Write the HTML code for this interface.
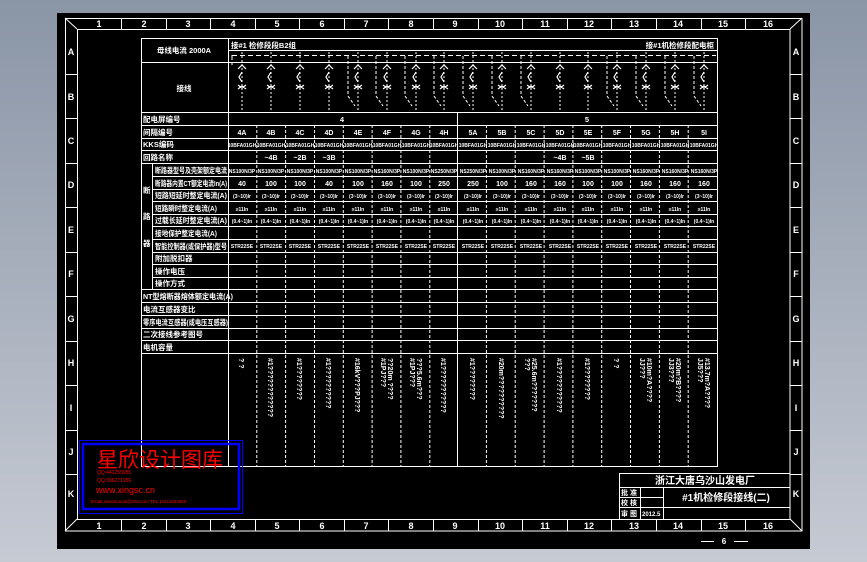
<!DOCTYPE html>
<html><head><meta charset="utf-8"><style>
html,body{margin:0;padding:0;width:867px;height:562px;overflow:hidden}
svg{display:block}
.t{fill:#fff;font-family:"Liberation Sans","Noto Sans CJK SC",sans-serif;font-weight:bold}
.s{font-size:7px}.xs{font-size:5px}.m{text-anchor:middle}
.r{fill:#f00;font-family:"Liberation Sans","Noto Sans CJK SC",sans-serif}
</style></head><body>
<svg width="867" height="562" viewBox="0 0 867 562" xmlns="http://www.w3.org/2000/svg">
<defs><linearGradient id="bg" x1="0" y1="0" x2="0" y2="1"><stop offset="0" stop-color="#8a95a6"/><stop offset="1" stop-color="#c6cad3"/></linearGradient></defs>
<rect width="867" height="562" fill="url(#bg)"/>
<rect x="57" y="13" width="753" height="536" fill="#000"/>
<g stroke="#fff" stroke-width="1" fill="none">
<rect x="65.5" y="18.5" width="736.5" height="512.5"/>
<rect x="77.5" y="29.5" width="712.5" height="490"/>
<path d="M65 18L77 29M802 18L790 29M65 531L77 519M802 531L790 519"/>
<path d="M121.5 18v11M166.5 18v11M210.5 18v11M255.5 18v11M299.5 18v11M344.5 18v11M388.5 18v11M433.5 18v11M478.5 18v11M522.5 18v11M567.5 18v11M611.5 18v11M656.5 18v11M701.5 18v11M745.5 18v11"/>
<path d="M121.5 520v11M166.5 520v11M210.5 520v11M255.5 520v11M299.5 520v11M344.5 520v11M388.5 520v11M433.5 520v11M478.5 520v11M522.5 520v11M567.5 520v11M611.5 520v11M656.5 520v11M701.5 520v11M745.5 520v11"/>
<path d="M65 74.5h12M65 118.5h12M65 163.5h12M65 207.5h12M65 252.5h12M65 296.5h12M65 341.5h12M65 385.5h12M65 430.5h12M65 474.5h12"/>
<path d="M790 74.5h12M790 118.5h12M790 163.5h12M790 207.5h12M790 252.5h12M790 296.5h12M790 341.5h12M790 385.5h12M790 430.5h12M790 474.5h12"/>
<!-- table -->
<path d="M141 38.5h577M141 62.5h577M141 112.5h577M141 125.5h577M141 138.5h577M141 150.5h577M141 163.5h577M141 289.5h577M141 302.5h577M141 315.5h577M141 328.5h577M141 340.5h577M141 353.5h577M141 466.5h577"/>
<path d="M152 176.5h566M152 189.5h566M152 201.5h566M152 214.5h566M152 226.5h566M152 239.5h566M152 252.5h566M152 264.5h566M152 277.5h566"/>
<path d="M141.5 38v428M152.5 163v126M228.5 38v428M717.5 38v428M457.5 112v354"/>
<path stroke-dasharray="3,2" d="M256.8 125v341M285.6 125v341M314.5 125v341M343.3 125v341M372.1 125v341M400.9 125v341M429.8 125v341M486.4 125v341M515.2 125v341M544.1 125v341M572.9 125v341M601.7 125v341M630.5 125v341M659.4 125v341M688.2 125v341"/>
<!-- bus -->
<path d="M228 50.5h490"/>
<path stroke-dasharray="5,3" d="M232 55.5h484M232 55v10"/>
<path stroke-dasharray="2,2" d="M242 52v58M271 52v58M300 52v58M329 52v58M358 52v58M387 52v58M416 52v58M444 52v58M473 52v58M502 52v58M531 52v58M560 52v58M588 52v58M617 52v58M646 52v58M675 52v58M704 52v58"/>
<path stroke-dasharray="3,2" d="M348 56v40l7 10M376 56v40l7 10M405 56v40l7 10M434 56v40l7 10M463 56v40l7 10M492 56v40l7 10M521 56v40l7 10M607 56v40l7 10M636 56v40l7 10M665 56v40l7 10M694 56v40l7 10"/>
</g>
<g stroke="#fff" stroke-width="1.2" fill="none">
<path d="M238 69l4-4 4 4M238 85l4 3 4-3M238 89l4-3 4 3M242 72l-3 5 3 5M267 69l4-4 4 4M267 85l4 3 4-3M267 89l4-3 4 3M271 72l-3 5 3 5M296 69l4-4 4 4M296 85l4 3 4-3M296 89l4-3 4 3M300 72l-3 5 3 5M325 69l4-4 4 4M325 85l4 3 4-3M325 89l4-3 4 3M329 72l-3 5 3 5M354 69l4-4 4 4M354 85l4 3 4-3M354 89l4-3 4 3M358 72l-3 5 3 5M383 69l4-4 4 4M383 85l4 3 4-3M383 89l4-3 4 3M387 72l-3 5 3 5M412 69l4-4 4 4M412 85l4 3 4-3M412 89l4-3 4 3M416 72l-3 5 3 5M440 69l4-4 4 4M440 85l4 3 4-3M440 89l4-3 4 3M444 72l-3 5 3 5M469 69l4-4 4 4M469 85l4 3 4-3M469 89l4-3 4 3M473 72l-3 5 3 5M498 69l4-4 4 4M498 85l4 3 4-3M498 89l4-3 4 3M502 72l-3 5 3 5M527 69l4-4 4 4M527 85l4 3 4-3M527 89l4-3 4 3M531 72l-3 5 3 5M556 69l4-4 4 4M556 85l4 3 4-3M556 89l4-3 4 3M560 72l-3 5 3 5M584 69l4-4 4 4M584 85l4 3 4-3M584 89l4-3 4 3M588 72l-3 5 3 5M613 69l4-4 4 4M613 85l4 3 4-3M613 89l4-3 4 3M617 72l-3 5 3 5M642 69l4-4 4 4M642 85l4 3 4-3M642 89l4-3 4 3M646 72l-3 5 3 5M671 69l4-4 4 4M671 85l4 3 4-3M671 89l4-3 4 3M675 72l-3 5 3 5M700 69l4-4 4 4M700 85l4 3 4-3M700 89l4-3 4 3M704 72l-3 5 3 5"/>
</g>
<!-- frame labels -->
<g class="t m" font-size="9">
<text x="99" y="27">1</text><text x="144" y="27">2</text><text x="188" y="27">3</text><text x="233" y="27">4</text><text x="277" y="27">5</text><text x="322" y="27">6</text><text x="366" y="27">7</text><text x="411" y="27">8</text><text x="455" y="27">9</text><text x="500" y="27">10</text><text x="545" y="27">11</text><text x="589" y="27">12</text><text x="634" y="27">13</text><text x="678" y="27">14</text><text x="723" y="27">15</text><text x="768" y="27">16</text>
<text x="99" y="529">1</text><text x="144" y="529">2</text><text x="188" y="529">3</text><text x="233" y="529">4</text><text x="277" y="529">5</text><text x="322" y="529">6</text><text x="366" y="529">7</text><text x="411" y="529">8</text><text x="455" y="529">9</text><text x="500" y="529">10</text><text x="545" y="529">11</text><text x="589" y="529">12</text><text x="634" y="529">13</text><text x="678" y="529">14</text><text x="723" y="529">15</text><text x="768" y="529">16</text>
<text x="71" y="55">A</text><text x="71" y="100">B</text><text x="71" y="144">C</text><text x="71" y="188">D</text><text x="71" y="233">E</text><text x="71" y="277">F</text><text x="71" y="322">G</text><text x="71" y="366">H</text><text x="71" y="411">I</text><text x="71" y="455">J</text><text x="71" y="497">K</text>
<text x="796" y="55">A</text><text x="796" y="100">B</text><text x="796" y="144">C</text><text x="796" y="188">D</text><text x="796" y="233">E</text><text x="796" y="277">F</text><text x="796" y="322">G</text><text x="796" y="366">H</text><text x="796" y="411">I</text><text x="796" y="455">J</text><text x="796" y="497">K</text>
</g>
<!-- left labels -->
<g class="t" font-size="7.5">
<text x="184" y="53" class="m">母线电流 2000A</text>
<text x="184" y="91" class="m">接线</text>
<text x="143" y="122">配电屏编号</text>
<text x="143" y="135">间隔编号</text>
<text x="143" y="147">KKS编码</text>
<text x="143" y="160">回路名称</text>
<text x="143" y="193">断</text><text x="143" y="219">路</text><text x="143" y="246">器</text>
<text x="155" y="173" textLength="72" lengthAdjust="spacingAndGlyphs">断路器型号及壳架额定电流</text>
<text x="155" y="186" textLength="72" lengthAdjust="spacingAndGlyphs">断路器内置CT额定电流In(A)</text>
<text x="155" y="198" textLength="72" lengthAdjust="spacingAndGlyphs">短路短延时整定电流(A)</text>
<text x="155" y="211" textLength="62" lengthAdjust="spacingAndGlyphs">短路瞬时整定电流(A)</text>
<text x="155" y="223" textLength="72" lengthAdjust="spacingAndGlyphs">过载长延时整定电流(A)</text>
<text x="155" y="236" textLength="62" lengthAdjust="spacingAndGlyphs">接地保护整定电流(A)</text>
<text x="155" y="249" textLength="72" lengthAdjust="spacingAndGlyphs">智能控制器(或保护器)型号</text>
<text x="155" y="261">附加脱扣器</text>
<text x="155" y="274">操作电压</text>
<text x="155" y="286">操作方式</text>
<text x="143" y="299" textLength="90" lengthAdjust="spacingAndGlyphs">NT型熔断器熔体额定电流(A)</text>
<text x="143" y="312">电流互感器变比</text>
<text x="143" y="325" textLength="85" lengthAdjust="spacingAndGlyphs">零序电流互感器(或电压互感器)</text>
<text x="143" y="337">二次接线参考图号</text>
<text x="143" y="350">电机容量</text>
<text x="231" y="48">接#1 检修段段B2组</text>
<text x="714" y="48" text-anchor="end">接#1机检修段配电柜</text>
<text x="342" y="122" class="m">4</text>
<text x="587" y="122" class="m">5</text>
</g>
<g class="t s m">
<text x="242" y="135">4A</text><text x="271" y="135">4B</text><text x="300" y="135">4C</text><text x="329" y="135">4D</text><text x="358" y="135">4E</text><text x="387" y="135">4F</text><text x="416" y="135">4G</text><text x="444" y="135">4H</text><text x="473" y="135">5A</text><text x="502" y="135">5B</text><text x="531" y="135">5C</text><text x="560" y="135">5D</text><text x="588" y="135">5E</text><text x="617" y="135">5F</text><text x="646" y="135">5G</text><text x="675" y="135">5H</text><text x="704" y="135">5I</text>
<text x="271" y="160">~4B</text><text x="300" y="160">~2B</text><text x="329" y="160">~3B</text><text x="560" y="160">~4B</text><text x="588" y="160">~5B</text>
<text x="242" y="186">40</text><text x="271" y="186">100</text><text x="300" y="186">100</text><text x="329" y="186">40</text><text x="358" y="186">100</text><text x="387" y="186">160</text><text x="416" y="186">100</text><text x="444" y="186">250</text><text x="473" y="186">250</text><text x="502" y="186">100</text><text x="531" y="186">160</text><text x="560" y="186">160</text><text x="588" y="186">100</text><text x="617" y="186">100</text><text x="646" y="186">160</text><text x="675" y="186">160</text><text x="704" y="186">160</text>
</g>
<g class="t xs m">
<text x="242" y="147">10BFA01GH</text><text x="271" y="147">10BFA01GH</text><text x="300" y="147">10BFA01GH</text><text x="329" y="147">10BFA01GH</text><text x="358" y="147">10BFA01GH</text><text x="387" y="147">10BFA01GH</text><text x="416" y="147">10BFA01GH</text><text x="444" y="147">10BFA01GH</text><text x="473" y="147">10BFA01GH</text><text x="502" y="147">10BFA01GH</text><text x="531" y="147">10BFA01GH</text><text x="560" y="147">10BFA01GH</text><text x="588" y="147">10BFA01GH</text><text x="617" y="147">10BFA01GH</text><text x="646" y="147">10BFA01GH</text><text x="675" y="147">10BFA01GH</text><text x="704" y="147">10BFA01GH</text>
<text x="242" y="173">NS100N/3P</text><text x="271" y="173">NS100N/3P</text><text x="300" y="173">NS100N/3P</text><text x="329" y="173">NS100N/3P</text><text x="358" y="173">NS100N/3P</text><text x="387" y="173">NS160N/3P</text><text x="416" y="173">NS100N/3P</text><text x="444" y="173">NS250N/3P</text><text x="473" y="173">NS250N/3P</text><text x="502" y="173">NS100N/3P</text><text x="531" y="173">NS160N/3P</text><text x="560" y="173">NS160N/3P</text><text x="588" y="173">NS100N/3P</text><text x="617" y="173">NS100N/3P</text><text x="646" y="173">NS160N/3P</text><text x="675" y="173">NS160N/3P</text><text x="704" y="173">NS160N/3P</text>
<text x="242" y="198">(3~10)Ir</text><text x="271" y="198">(3~10)Ir</text><text x="300" y="198">(3~10)Ir</text><text x="329" y="198">(3~10)Ir</text><text x="358" y="198">(3~10)Ir</text><text x="387" y="198">(3~10)Ir</text><text x="416" y="198">(3~10)Ir</text><text x="444" y="198">(3~10)Ir</text><text x="473" y="198">(3~10)Ir</text><text x="502" y="198">(3~10)Ir</text><text x="531" y="198">(3~10)Ir</text><text x="560" y="198">(3~10)Ir</text><text x="588" y="198">(3~10)Ir</text><text x="617" y="198">(3~10)Ir</text><text x="646" y="198">(3~10)Ir</text><text x="675" y="198">(3~10)Ir</text><text x="704" y="198">(3~10)Ir</text>
<text x="242" y="211">≥11In</text><text x="271" y="211">≥11In</text><text x="300" y="211">≥11In</text><text x="329" y="211">≥11In</text><text x="358" y="211">≥11In</text><text x="387" y="211">≥11In</text><text x="416" y="211">≥11In</text><text x="444" y="211">≥11In</text><text x="473" y="211">≥11In</text><text x="502" y="211">≥11In</text><text x="531" y="211">≥11In</text><text x="560" y="211">≥11In</text><text x="588" y="211">≥11In</text><text x="617" y="211">≥11In</text><text x="646" y="211">≥11In</text><text x="675" y="211">≥11In</text><text x="704" y="211">≥11In</text>
<text x="242" y="223">(0.4~1)In</text><text x="271" y="223">(0.4~1)In</text><text x="300" y="223">(0.4~1)In</text><text x="329" y="223">(0.4~1)In</text><text x="358" y="223">(0.4~1)In</text><text x="387" y="223">(0.4~1)In</text><text x="416" y="223">(0.4~1)In</text><text x="444" y="223">(0.4~1)In</text><text x="473" y="223">(0.4~1)In</text><text x="502" y="223">(0.4~1)In</text><text x="531" y="223">(0.4~1)In</text><text x="560" y="223">(0.4~1)In</text><text x="588" y="223">(0.4~1)In</text><text x="617" y="223">(0.4~1)In</text><text x="646" y="223">(0.4~1)In</text><text x="675" y="223">(0.4~1)In</text><text x="704" y="223">(0.4~1)In</text>
<text x="242" y="248">STR22SE</text><text x="271" y="248">STR22SE</text><text x="300" y="248">STR22SE</text><text x="329" y="248">STR22SE</text><text x="358" y="248">STR22SE</text><text x="387" y="248">STR22SE</text><text x="416" y="248">STR22SE</text><text x="444" y="248">STR22SE</text><text x="473" y="248">STR22SE</text><text x="502" y="248">STR22SE</text><text x="531" y="248">STR22SE</text><text x="560" y="248">STR22SE</text><text x="588" y="248">STR22SE</text><text x="617" y="248">STR22SE</text><text x="646" y="248">STR22SE</text><text x="675" y="248">STR22SE</text><text x="704" y="248">STR22SE</text>
</g>
<!-- vertical texts -->
<g class="t s">
<text transform="translate(239,358) rotate(90)">? ?</text>
<text transform="translate(268,358) rotate(90)">#1????????????</text>
<text transform="translate(297,358) rotate(90)">#1????????</text>
<text transform="translate(326,358) rotate(90)">#1??????????</text>
<text transform="translate(355,358) rotate(90)">#16kV???PJ???</text>
<text transform="translate(381,358) rotate(90)">#1PJ???</text><text transform="translate(388,358) rotate(90)">??20m ????</text>
<text transform="translate(410,358) rotate(90)">#1PJ???</text><text transform="translate(417,358) rotate(90)">???5.6m???</text>
<text transform="translate(441,358) rotate(90)">#1???????????</text>
<text transform="translate(470,358) rotate(90)">#1????????</text>
<text transform="translate(499,358) rotate(90)">#20m??????????</text>
<text transform="translate(525,358) rotate(90)">???</text><text transform="translate(532,358) rotate(90)">#25.6m???????</text>
<text transform="translate(557,358) rotate(90)">#1???????????</text>
<text transform="translate(585,358) rotate(90)">#1????????</text>
<text transform="translate(614,358) rotate(90)">? ?</text>
<text transform="translate(640,358) rotate(90)">JJ???</text><text transform="translate(647,358) rotate(90)">#10m?A????</text>
<text transform="translate(669,358) rotate(90)">JJ3???</text><text transform="translate(676,358) rotate(90)">#20m?B????</text>
<text transform="translate(698,358) rotate(90)">JJ5???</text><text transform="translate(705,358) rotate(90)">#13.7m?A????</text>
</g>
<!-- title block -->
<g stroke="#fff" fill="none">
<path d="M619.5 473v46M619.5 473.5h171M619.5 487.5h171M619.5 497.5h44M619.5 507.5h171M640.5 487v32M663.5 487v32"/>
</g>
<g class="t">
<text x="705" y="484" class="m" font-size="10">浙江大唐乌沙山发电厂</text>
<text x="726" y="501" class="m" font-size="10">#1机检修段接线(二)</text>
<text x="621" y="495" font-size="7">批 准</text>
<text x="621" y="505" font-size="7">校 核</text>
<text x="621" y="516" font-size="7">审 图</text>
<text x="642" y="516" font-size="6">2012.5</text>
<text x="724" y="544" class="m" font-size="8">6</text>
</g>
<path d="M701 541.5h13M734 541.5h14" stroke="#fff"/>
<!-- watermark -->
<rect x="79.5" y="440.5" width="163" height="73" fill="none" stroke="#00f" stroke-width="1"/>
<rect x="83" y="444" width="156" height="65" fill="none" stroke="#00f" stroke-width="2.5"/>
<text x="97" y="467" class="r" font-size="21">星欣设计图库</text>
<text x="97" y="474" class="r" font-size="5">QQ:441255955</text>
<text x="97" y="482" class="r" font-size="5">QQ:396271956</text>
<text x="96" y="493" class="r" font-size="9">www.xingsc.cn</text>
<text x="91" y="503" class="r" font-size="4.5">Email:xinxinmucai@163.com  TEL:13111542600</text>
</svg>
</body></html>
